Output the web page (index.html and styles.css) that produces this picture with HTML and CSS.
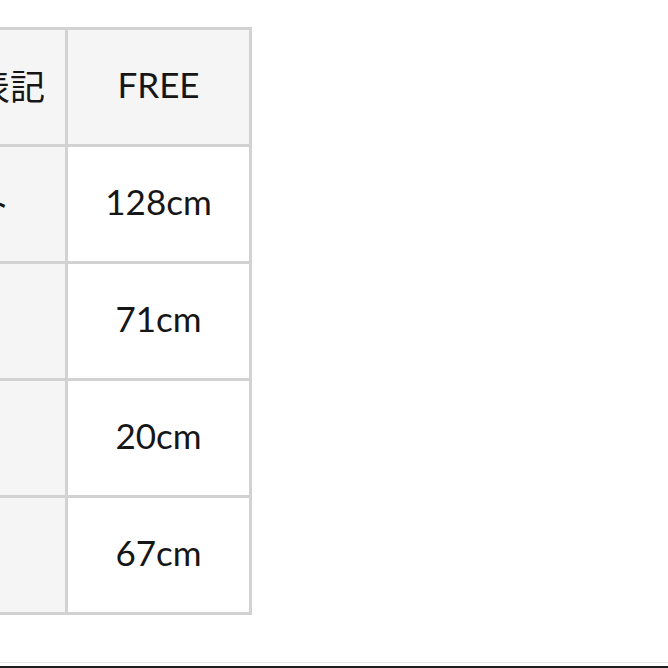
FILE: index.html
```html
<!DOCTYPE html>
<html lang="ja">
<head>
<meta charset="utf-8">
<link rel="stylesheet" href="styles.css">
</head>
<body>
<div class="page">
  <div class="size-table">
    <div class="cell head label">サイズ表記</div>
    <div class="cell head">FREE</div>
    <div class="cell label">バスト</div>
    <div class="cell">128cm</div>
    <div class="cell label">着丈</div>
    <div class="cell">71cm</div>
    <div class="cell label">袖丈</div>
    <div class="cell">20cm</div>
    <div class="cell label">肩幅</div>
    <div class="cell">67cm</div>
  </div>
  <div class="rule"></div>
</div>
</body>
</html>
```

FILE: styles.css
```css
html, body {
  margin: 0;
  padding: 0;
  background: #ffffff;
}
.page {
  width: 668px;
  height: 668px;
  overflow: hidden;
  padding-top: 27px;
  box-sizing: border-box;
  display: flex;
  flex-direction: column;
}
.size-table {
  display: grid;
  grid-template-columns: 214px 181px;
  grid-auto-rows: 114px;
  gap: 3px;
  padding: 3px;
  background: #d2d2d2;
  margin-left: -152px;
  width: max-content;
}
.cell {
  background: #ffffff;
  display: flex;
  align-items: center;
  justify-content: center;
  padding-bottom: 6px;
  box-sizing: border-box;
  font-family: Lato, "Noto Sans CJK JP", sans-serif;
  font-size: 35px;
  color: #161616;
  white-space: nowrap;
}
.head, .label {
  background: #f5f5f5;
}
.rule {
  margin-top: 47px;
  height: 3px;
  border-top: 1px solid #e6e6e6;
  border-bottom: 3px solid #1e1e1e;
  flex-shrink: 0;
}
```
